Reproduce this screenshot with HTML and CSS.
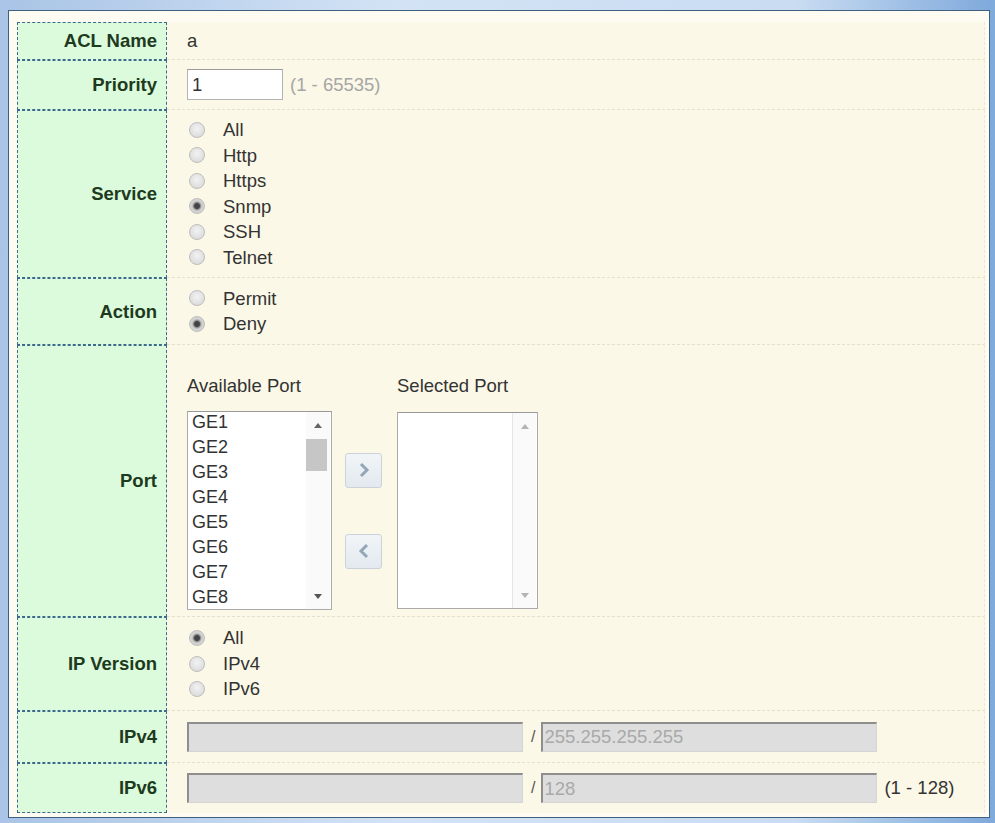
FILE: index.html
```html
<!DOCTYPE html>
<html lang="en">
<head>
    <meta charset="UTF-8">
    <meta name="viewport" content="width=device-width, initial-scale=1.0">
    <title>Add ACL</title>
    <link rel="stylesheet" href="styles.css">
</head>
<body>
    <div class="frame">
        <div class="acl-form">
            <div class="label">ACL Name</div>
            <div class="value">a</div>

            <div class="label">Priority</div>
            <div class="value">
                <input type="text" class="priority-input" value="1" aria-label="Priority">
                <span class="hint">(1 - 65535)</span>
            </div>

            <div class="label">Service</div>
            <div class="value">
                <div class="radio-list">
                    <label><input type="radio" name="service"> All</label>
                    <label><input type="radio" name="service"> Http</label>
                    <label><input type="radio" name="service"> Https</label>
                    <label><input type="radio" name="service" checked> Snmp</label>
                    <label><input type="radio" name="service"> SSH</label>
                    <label><input type="radio" name="service"> Telnet</label>
                </div>
            </div>

            <div class="label">Action</div>
            <div class="value">
                <div class="radio-list">
                    <label><input type="radio" name="action"> Permit</label>
                    <label><input type="radio" name="action" checked> Deny</label>
                </div>
            </div>

            <div class="label">Port</div>
            <div class="value value-port">
                <div class="port-picker">
                    <div class="port-title">Available Port</div>
                    <div class="spacer"></div>
                    <div class="port-title port-title-right">Selected Port</div>

                    <div class="listbox">
                        <ul class="list-items">
                            <li>GE1</li>
                            <li>GE2</li>
                            <li>GE3</li>
                            <li>GE4</li>
                            <li>GE5</li>
                            <li>GE6</li>
                            <li>GE7</li>
                            <li>GE8</li>
                        </ul>
                        <div class="scrollbar">
                            <div class="arrow-box"><span class="arrow-up"></span></div>
                            <div class="track"><div class="thumb"></div></div>
                            <div class="arrow-box"><span class="arrow-down"></span></div>
                        </div>
                    </div>

                    <div class="move-buttons">
                        <button class="move-btn" aria-label="Add">
                            <svg width="14" height="16" viewBox="0 0 14 16"><polyline points="4,2 10,8 4,14" fill="none" stroke="#93a7b8" stroke-width="3"/></svg>
                        </button>
                        <button class="move-btn" aria-label="Remove">
                            <svg width="14" height="16" viewBox="0 0 14 16"><polyline points="10,2 4,8 10,14" fill="none" stroke="#93a7b8" stroke-width="3"/></svg>
                        </button>
                    </div>

                    <div class="listbox listbox-empty">
                        <ul class="list-items"></ul>
                        <div class="scrollbar">
                            <div class="arrow-box"><span class="arrow-up"></span></div>
                            <div class="track"></div>
                            <div class="arrow-box"><span class="arrow-down"></span></div>
                        </div>
                    </div>
                </div>
            </div>

            <div class="label">IP Version</div>
            <div class="value">
                <div class="radio-list">
                    <label><input type="radio" name="ipver" checked> All</label>
                    <label><input type="radio" name="ipver"> IPv4</label>
                    <label><input type="radio" name="ipver"> IPv6</label>
                </div>
            </div>

            <div class="label">IPv4</div>
            <div class="value">
                <input type="text" class="addr-input" disabled aria-label="IPv4 address">
                <span class="slash">/</span>
                <input type="text" class="addr-input" value="255.255.255.255" disabled aria-label="IPv4 mask">
            </div>

            <div class="label last">IPv6</div>
            <div class="value last">
                <input type="text" class="addr-input" disabled aria-label="IPv6 address">
                <span class="slash">/</span>
                <input type="text" class="addr-input" value="128" disabled aria-label="IPv6 prefix">
                <span class="range">(1 - 128)</span>
            </div>
        </div>
    </div>
</body>
</html>
```

FILE: styles.css
```css
* {
    margin: 0;
    padding: 0;
    box-sizing: border-box;
}

body {
    height: 823px;
    padding: 10px 5px 5px 8px;
    font-family: 'Liberation Sans', Arial, sans-serif;
    font-size: 18.5px;
    color: #333;
    background: linear-gradient(to right, #a9c4e6, #d3e3f5 40%, #c9dcf2 80%, #7ea9db);
}

.frame {
    height: 808px;
    padding: 11px 4px 4px 8px;
    background-color: #fdfbf2;
    border: 1px solid #3f5f7f;
}

.acl-form {
    display: grid;
    grid-template-columns: 150px 1fr;
    grid-template-rows: 38px 50px 168px 67px 272px 94px 52px 50px;
}

.label {
    display: flex;
    align-items: center;
    justify-content: flex-end;
    padding-right: 9px;
    background-color: #dcfadc;
    border: 1px dashed #3d6a8c;
    font-weight: bold;
    color: #1e3a1e;
}

.value {
    display: flex;
    align-items: center;
    padding-left: 20px;
    background-color: #fbf8e7;
    border-bottom: 1px dashed #e4e0cc;
    border-right: 1px dashed #ece8d6;
}

.value.last {
    border-bottom: none;
}

/* Priority */
.priority-input {
    width: 96px;
    height: 31px;
    padding-left: 4px;
    font: inherit;
    color: #333;
    background: #fff;
    border: 1px solid #b4b4b4;
    border-top-color: #9a9a9a;
}

.hint {
    margin-left: 7px;
    color: #a6a6a6;
}

/* Radios */
.radio-list {
    display: flex;
    flex-direction: column;
}

.radio-list label {
    display: flex;
    align-items: center;
    line-height: 25.5px;
}

input[type="radio"] {
    appearance: none;
    width: 16px;
    height: 16px;
    margin: 0 18px 0 2px;
    border: 1px solid #bdbdbd;
    border-radius: 50%;
    background: radial-gradient(circle at 50% 40%, #f2f2f2, #d6d6d6);
}

input[type="radio"]:checked {
    background: radial-gradient(circle, #444 0 2.5px, #8f8f8f 3.5px, #cfcfcf 5px, #e0e0e0);
}

/* Port picker */
.value-port {
    align-items: flex-start;
    padding-top: 30px;
}

.port-picker {
    display: grid;
    grid-template-columns: 145px 37px 143px;
    grid-template-rows: 22px 199px;
    column-gap: 13px;
    row-gap: 14px;
}

.port-title {
    line-height: 22px;
    white-space: nowrap;
}

.port-title-right {
    margin-left: 2px;
}

.listbox {
    display: flex;
    background: #fff;
    border: 1px solid #aaa;
    border-top-color: #999;
    overflow: hidden;
}

.listbox-empty {
    margin-left: 2px;
    margin-top: 1px;
    height: 197px;
}

.list-items {
    flex: 1;
    list-style: none;
    margin-top: -2px;
    padding-left: 4px;
    font-size: 18px;
    line-height: 25px;
}

.scrollbar {
    display: flex;
    flex-direction: column;
    width: 24px;
    margin-right: 1px;
    background: #fafafa;
}

.listbox-empty .scrollbar {
    border-left: 1px solid #e6e6e6;
}

.arrow-box {
    height: 26px;
    display: flex;
    align-items: center;
    justify-content: center;
}

.arrow-up,
.arrow-down {
    width: 0;
    height: 0;
    border-left: 4px solid transparent;
    border-right: 4px solid transparent;
}

.arrow-up {
    border-bottom: 5px solid #666;
}

.arrow-down {
    border-top: 5px solid #555;
}

.listbox-empty .arrow-up {
    border-bottom-color: #b4b4b4;
}

.listbox-empty .arrow-down {
    border-top-color: #b4b4b4;
}

.track {
    flex: 1;
}

.thumb {
    width: 21px;
    height: 32px;
    margin-top: 1px;
    background-color: #c6c6c6;
}

.move-buttons {
    display: flex;
    flex-direction: column;
    justify-content: center;
    gap: 46px;
}

.move-btn {
    width: 37px;
    height: 35px;
    display: flex;
    align-items: center;
    justify-content: center;
    background: linear-gradient(#f1f5f8, #e3e9ee);
    border: 1px solid #cbd3da;
    border-radius: 3px;
}

/* Address inputs */
.addr-input {
    width: 336px;
    height: 30px;
    padding-left: 1px;
    font: inherit;
    color: #a9a9a9;
    background-color: #dedede;
    border: 1px solid #d4d4d4;
    border-top: 2px solid #8e8e8e;
    border-left: 2px solid #8e8e8e;
}

.slash {
    margin: 0 6px 0 8px;
    color: #555;
    font-size: 16px;
}

.range {
    margin-left: 7px;
    color: #333;
}
```
